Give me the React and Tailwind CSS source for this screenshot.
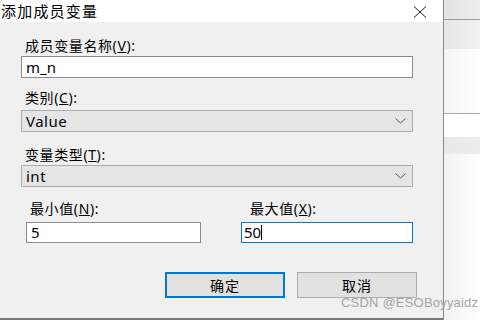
import React from 'react';

const ui = { fontFamily: '"Segoe UI", "Noto Sans", "Noto Sans CJK SC", sans-serif' };

const Chevron = () => (
    <svg width="11" height="6" viewBox="0 0 11 6" className="mr-[6px]">
        <path d="M0.5 0.5 L5.5 5 L10.5 0.5" fill="none" stroke="#555" strokeWidth="1" />
    </svg>
);

const Select = ({ value }) => (
    <div className="w-[392px] h-[22px] bg-[#e5e5e5] border border-[#adadad] flex items-center justify-between pl-[4px] text-[15px] text-black">
        <span className="tracking-[0.5px]">{value}</span>
        <Chevron />
    </div>
);

const Label = ({ text, hot, className = '' }) => (
    <div className={`h-[16px] leading-[16px] text-[14px] text-black tracking-[0.6px] ${className}`}>
        {text}(<span className="underline">{hot}</span>):
    </div>
);

export default function App() {
    return (
        <div className="w-[480px] h-[320px] flex overflow-hidden bg-white relative" style={ui}>
            <div className="w-[444px] h-[320px] flex flex-col border-r border-[#8a8a8a]">
                <div className="h-[22px] bg-white flex items-center justify-between">
                    <span className="text-[15px] text-black pl-[1px] tracking-[1.2px] leading-[22px]">添加成员变量</span>
                    <svg width="14" height="12" viewBox="0 0 14 12" className="mr-[16px] mt-[2px]">
                        <path d="M1 0.5 L13 11.5 M13 0.5 L1 11.5" stroke="#222" strokeWidth="1" />
                    </svg>
                </div>
                <div className="flex-1 bg-[#f0f0f0] border-b-2 border-[#7a7a7a] pl-[21px] flex flex-col">
                    <Label text="成员变量名称" hot="V" className="mt-[16px] ml-[4px]" />
                    <div className="mt-[2px] w-[392px] h-[22px] bg-white border border-[#8c8c8c] flex items-center pl-[4px] text-[15px] text-black">m_n</div>

                    <Label text="类别" hot="C" className="mt-[12px] ml-[4px]" />
                    <div className="mt-[4px]"><Select value="Value" /></div>

                    <Label text="变量类型" hot="T" className="mt-[15px] ml-[4px]" />
                    <div className="mt-[2px]"><Select value="int" /></div>

                    <div className="flex mt-[14px]">
                        <div className="ml-[5px] w-[175px]">
                            <Label text="最小值" hot="N" className="ml-[4px]" />
                            <div className="mt-[5px] w-[175px] h-[21px] bg-white border border-[#8c8c8c] flex items-center pl-[4px] text-[15px] text-black">5</div>
                        </div>
                        <div className="ml-[40px] w-[172px]">
                            <Label text="最大值" hot="X" className="ml-[9px]" />
                            <div className="mt-[5px] w-[172px] h-[21px] bg-white border border-[#0078d7] flex items-center pl-[2px] text-[15px] text-black">
                                50<span className="w-[1px] h-[15px] bg-black"></span>
                            </div>
                        </div>
                    </div>

                    <div className="flex mt-[29px] ml-[144px] gap-[12px]">
                        <div className="w-[120px] h-[26px] bg-[#e1e1e1] border-2 border-[#0078d7] flex items-center justify-center text-[14px] text-black tracking-[1px]">确定</div>
                        <div className="w-[120px] h-[26px] bg-[#e1e1e1] border border-[#adadad] flex items-center justify-center text-[14px] text-black tracking-[1px]">取消</div>
                    </div>
                </div>
            </div>
            <div className="flex-1 flex flex-col bg-gradient-to-r from-[#e4e4e4] to-white">
                <div className="h-[20px] bg-gradient-to-r from-[#e2e2e2] to-[#eeeeee] border-b border-[#9a9a9a]"></div>
                <div className="h-[29px] bg-gradient-to-r from-[#e6e6e6] to-[#f2f2f2]"></div>
                <div className="h-[65px] bg-gradient-to-r from-[#f4f4f4] to-white border-b border-[#a8a8a8]"></div>
                <div className="h-[23px] bg-white"></div>
                <div className="h-[17px] bg-gradient-to-r from-[#e8e8e8] to-[#ededed]"></div>
                <div className="flex-1 bg-gradient-to-r from-[#f2f2f2] to-white"></div>
            </div>
            <div className="absolute z-10 left-[341px] top-[295px] text-[13px] text-[#a5a5a5] tracking-[0.2px] whitespace-nowrap leading-[16px]" style={{ fontFamily: '"Liberation Sans", sans-serif' }}>
                CSDN @ESOBoyyaidz
            </div>
        </div>
    );
}
